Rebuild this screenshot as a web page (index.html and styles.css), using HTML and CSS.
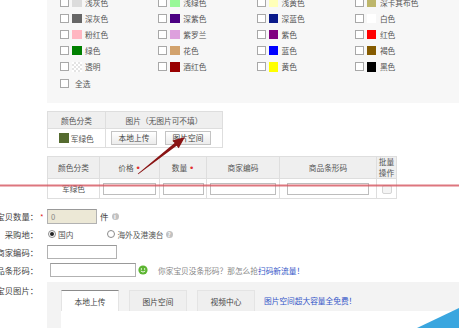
FILE: index.html
```html
<!DOCTYPE html>
<html lang="zh-CN">
<head>
  <meta charset="UTF-8" />
  <title>宝贝颜色与图片</title>
  <link rel="stylesheet" href="styles.css">
</head>
<body>
  <!-- 颜色选择 -->
  <div class="colors">
    <label class="opt"><span class="cb"></span><span class="sw c-lgray"></span>浅灰色</label>
    <label class="opt"><span class="cb"></span><span class="sw c-lgreen"></span>浅绿色</label>
    <label class="opt"><span class="cb"></span><span class="sw c-lyellow"></span>浅黄色</label>
    <label class="opt"><span class="cb"></span><span class="sw c-khaki"></span>深卡其布色</label>

    <label class="opt"><span class="cb"></span><span class="sw c-dgray"></span>深灰色</label>
    <label class="opt"><span class="cb"></span><span class="sw c-dpurple"></span>深紫色</label>
    <label class="opt"><span class="cb"></span><span class="sw c-dblue"></span>深蓝色</label>
    <label class="opt"><span class="cb"></span><span class="sw c-white"></span>白色</label>

    <label class="opt"><span class="cb"></span><span class="sw c-pink"></span>粉红色</label>
    <label class="opt"><span class="cb"></span><span class="sw c-violet"></span>紫罗兰</label>
    <label class="opt"><span class="cb"></span><span class="sw c-purple"></span>紫色</label>
    <label class="opt"><span class="cb"></span><span class="sw c-red"></span>红色</label>

    <label class="opt"><span class="cb"></span><span class="sw c-green"></span>绿色</label>
    <label class="opt"><span class="cb"></span><span class="sw c-tan"></span>花色</label>
    <label class="opt"><span class="cb"></span><span class="sw c-blue"></span>蓝色</label>
    <label class="opt"><span class="cb"></span><span class="sw c-brown"></span>褐色</label>

    <label class="opt"><span class="cb"></span><span class="sw c-clear"></span>透明</label>
    <label class="opt"><span class="cb"></span><span class="sw c-wine"></span>酒红色</label>
    <label class="opt"><span class="cb"></span><span class="sw c-yellow"></span>黄色</label>
    <label class="opt"><span class="cb"></span><span class="sw c-black"></span>黑色</label>

    <label class="opt all"><span class="cb"></span>全选</label>
  </div>

  <!-- 颜色图片 -->
  <table class="tbl tbl-img">
    <tr>
      <th class="w-color">颜色分类</th>
      <th class="w-pic">图片（无图片可不填）</th>
    </tr>
    <tr>
      <td><span class="sw c-army"></span>军绿色</td>
      <td class="btns"><span class="btn">本地上传</span><span class="btn">图片空间</span></td>
    </tr>
  </table>

  <!-- SKU -->
  <table class="tbl tbl-sku">
    <tr class="sku-head">
      <th class="k1">颜色分类</th>
      <th class="k2">价格 <i class="dot">•</i></th>
      <th class="k3">数量 <i class="dot">•</i></th>
      <th class="k4">商家编码</th>
      <th class="k5">商品条形码</th>
      <th class="k6">批量<br>操作</th>
    </tr>
    <tr class="sku-row">
      <td>军绿色</td>
      <td><span class="cin in-price"></span></td>
      <td><span class="cin in-qty"></span></td>
      <td><span class="cin in-code"></span></td>
      <td><span class="cin in-bar"></span></td>
      <td><span class="cb-off"></span></td>
    </tr>
  </table>

  <!-- 表单 -->
  <div class="form">
    <div class="row">
      <span class="lbl">宝贝数量：</span>
      <span class="req">*</span>
      <span class="field f-num">0</span>
      <span class="unit">件</span>
      <span class="ico-info">i</span>
    </div>
    <div class="row">
      <span class="lbl">采购地：</span>
      <span class="radio on"></span><span>国内</span>
      <span class="radio r2"></span><span>海外及港澳台</span>
      <span class="ico-help">?</span>
    </div>
    <div class="row">
      <span class="lbl">商家编码：</span>
      <span class="field f-code"></span>
    </div>
    <div class="row">
      <span class="lbl">商品条形码：</span>
      <span class="field f-bar"></span>
      <svg class="smile" width="10" height="10" viewBox="0 0 10 10">
        <circle cx="5" cy="5" r="4.6" fill="#5cb531"/>
        <circle cx="3.4" cy="4" r="0.7" fill="#fff"/>
        <circle cx="6.6" cy="4" r="0.7" fill="#fff"/>
        <path d="M2.8 6 Q5 8.2 7.2 6" stroke="#fff" stroke-width="0.9" fill="none"/>
      </svg>
      <span class="tip">你家宝贝没条形码？那怎么抢<a class="link">扫码新流量！</a></span>
    </div>
    <div class="row row-pic">
      <span class="lbl">宝贝图片：</span>
      <div class="pic-panel">
        <div class="tabs">
          <span class="tab active">本地上传</span>
          <span class="tab">图片空间</span>
          <span class="tab">视频中心</span>
          <a class="link free">图片空间超大容量全免费！</a>
        </div>
        <div class="pane"></div>
      </div>
    </div>
  </div>

  <!-- 标注 -->
  <svg class="marks" width="459" height="328" viewBox="0 0 459 328">
    <rect x="0" y="184.5" width="459" height="2" fill="#d4545e" fill-opacity="0.8"/>
    <polygon points="137.75,173.7 174.6,143.1 172.5,140.5 185,137 178.7,148.3 176.6,145.7 138.25,174.3" fill="#8a1414"/>
    <polygon points="417,328 459,308 459,328" fill="#3aa6df"/>
  </svg>
</body>
</html>
```

FILE: styles.css
```css
body {
  margin: 0;
  width: 459px;
  height: 328px;
  overflow: hidden;
  position: relative;
  background: #fff;
  font-family: "Noto Sans CJK SC", "Noto Sans", sans-serif;
  font-size: 7.7px;
  color: #555;
}

/* 颜色选择 */
.colors {
  margin: -12px 0 0 47px;
  padding: 6px 0 12px 13px;
  background: #f7f7f7;
  display: grid;
  grid-template-columns: repeat(4, 98.3px);
  grid-auto-rows: 16.2px;
}
.opt {
  display: flex;
  align-items: center;
  white-space: nowrap;
}
.cb {
  width: 9px;
  height: 9px;
  box-sizing: border-box;
  border: 1px solid #a8a8a8;
  background: #fff;
  margin-right: 3px;
  flex: none;
}
.all .cb { margin-right: 6px; }
.sw {
  display: inline-block;
  width: 9.5px;
  height: 9.5px;
  margin-right: 3.5px;
  flex: none;
}
.c-lgray { background: #dcdcdc; }
.c-lgreen { background: #98f898; }
.c-lyellow { background: #ffffb8; }
.c-khaki { background: #bdb66b; }
.c-dgray { background: #666; }
.c-dpurple { background: #4b0082; }
.c-dblue { background: #0a1a8a; }
.c-white { background: #fff; }
.c-pink { background: #ffb6c1; }
.c-violet { background: #dda0dd; }
.c-purple { background: #800080; }
.c-red { background: #ff0000; }
.c-green { background: #008000; }
.c-tan { background: #d2a26c; }
.c-blue { background: #0000ff; }
.c-brown { background: #855b00; }
.c-clear {
  background: repeating-conic-gradient(#e4e4e4 0 25%, #fff 0 50%) 0 0 / 4px 4px;
}
.c-wine { background: #990000; }
.c-yellow { background: #ffff00; }
.c-black { background: #000; }
.c-army { background: #556b2f; vertical-align: -1px; margin-right: 2px; }

/* 表格 */
.tbl {
  border-collapse: collapse;
  margin: 8px 0 0 47px;
}
.tbl th, .tbl td {
  border: 1px solid #dedede;
  padding: 0;
  font-weight: normal;
  text-align: center;
  white-space: nowrap;
}
.tbl th { background: #efefef; }
.tbl-img th { height: 16px; }
.tbl-img td { height: 18px; }
.w-color { width: 57px; }
.w-pic { width: 116px; }
.btns { text-align: left !important; padding-left: 5px !important; }
.btn {
  display: inline-block;
  width: 46px;
  height: 14px;
  line-height: 12px;
  box-sizing: border-box;
  border: 1px solid #c4c4c4;
  background: linear-gradient(#fff, #ececec);
  text-align: center;
  color: #444;
  margin-right: 8px;
  vertical-align: middle;
}

.sku-head th { height: 20px; line-height: 10px; }
.sku-head .k6 { line-height: 10.5px; }
.sku-row td { height: 19px; }
.k1 { width: 51px; }
.k2 { width: 59px; }
.k3 { width: 46px; }
.k4 { width: 72px; }
.k5 { width: 96px; }
.k6 { width: 19px; }
.dot { font-style: normal; color: #e03030; font-size: 9px; font-family: "DejaVu Sans", sans-serif; }
.cin {
  display: block;
  height: 12px;
  box-sizing: border-box;
  border: 1px solid #bdbdbd;
  background: #fff;
  margin: 0 auto;
}
.in-price { width: 53px; }
.in-qty { width: 41px; }
.in-code { width: 66px; }
.in-bar { width: 82px; }
.cb-off {
  display: inline-block;
  width: 8px;
  height: 7px;
  border: 1px solid #d4d4d4;
  border-radius: 2px;
  background: #f4f4f4;
  vertical-align: middle;
}

/* 表单 */
.form { margin-top: 8px; }
.row {
  display: flex;
  align-items: center;
  height: 18px;
  white-space: nowrap;
}
.lbl {
  width: 60px;
  margin-left: -22px;
  text-align: right;
  flex: none;
  font-size: 8.3px;
  color: #444;
}
.req {
  width: 9px;
  padding-left: 2px;
  box-sizing: border-box;
  color: #e02020;
  flex: none;
}
.field {
  display: block;
  height: 14px;
  box-sizing: border-box;
  border: 1px solid #b2b2b2;
  border-top-color: #999;
  background: #fff;
  flex: none;
}
.f-num {
  width: 50px;
  height: 15px;
  background: #ece8d6;
  color: #888;
  padding-left: 3px;
  line-height: 13px;
}
.f-code { width: 70px; margin-left: 9px; }
.f-bar { width: 86px; margin-left: 12px; }
.unit { margin-left: 3px; font-size: 8.5px; color: #444; }
.ico-info, .ico-help {
  display: inline-block;
  width: 7px;
  height: 7px;
  border-radius: 50%;
  background: #c2c2c2;
  color: #fff;
  font-size: 6px;
  line-height: 7px;
  text-align: center;
  font-weight: bold;
}
.ico-info { margin-left: 3px; }
.ico-help { margin-left: 2px; }
.radio {
  width: 8px;
  height: 8px;
  box-sizing: border-box;
  border: 1px solid #8a8a8a;
  border-radius: 50%;
  background: #fff;
  margin: 0 2px 0 10px;
  flex: none;
  position: relative;
}
.radio.on::after {
  content: "";
  position: absolute;
  left: 1px;
  top: 1px;
  width: 4px;
  height: 4px;
  border-radius: 50%;
  background: #222;
}
.radio.r2 { margin-left: 34px; }
.smile { margin-left: 2px; flex: none; }
.tip { margin-left: 10px; color: #888; }
.link { color: #3456c8; }

.row-pic {
  align-items: flex-start;
  height: auto;
  margin-top: 3px;
}
.row-pic .lbl { padding-top: 2px; }
.pic-panel {
  margin-left: 9px;
  flex: 1;
  background: #f3f3f3;
  padding: 8px 0 0 14px;
  height: 40px;
}
.tabs {
  display: flex;
  align-items: flex-end;
  gap: 10px;
  height: 21px;
}
.tab {
  width: 58px;
  height: 21px;
  box-sizing: border-box;
  display: flex;
  align-items: center;
  justify-content: center;
  background: #efefef;
  border: 1px solid #e4e4e4;
  border-bottom: none;
  color: #444;
}
.tab.active {
  background: #fff;
  border-top: 1px solid #8a8a8a;
}
.free { margin-left: -1px; align-self: center; }
.pane {
  background: #fff;
  height: 20px;
}

/* 标注层 */
.marks {
  position: absolute;
  left: 0;
  top: 0;
  pointer-events: none;
}
```
